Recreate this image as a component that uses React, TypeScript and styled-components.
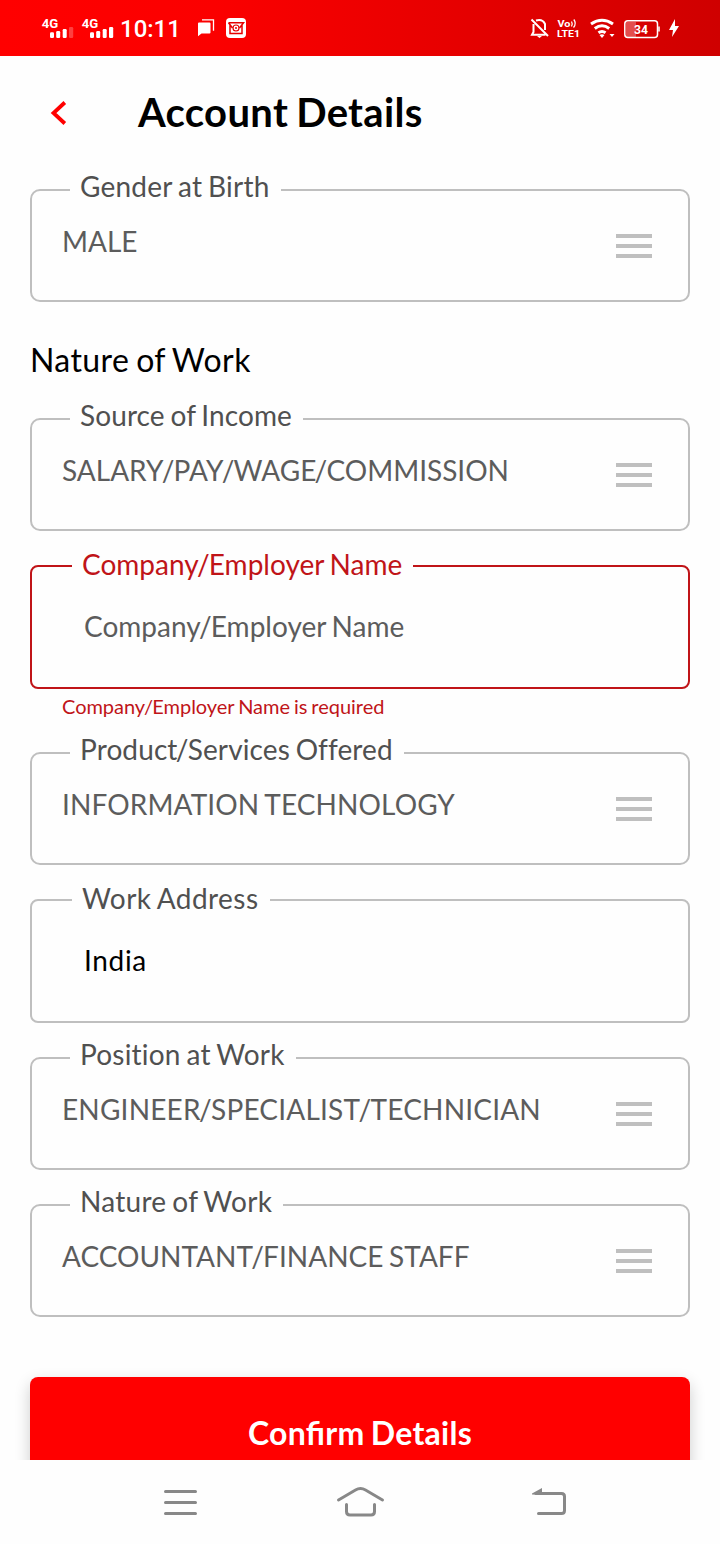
import React from "react";
import styled, { createGlobalStyle } from "styled-components";

const GlobalStyle = createGlobalStyle`
  * { box-sizing: border-box; }
  body { margin: 0; background: #fff; font-family: Lato, sans-serif; color: #000; }
`;

const Screen = styled.div`
  width: 720px;
  height: 1544px;
  display: flex;
  flex-direction: column;
  overflow: hidden;
  background: #fefefe;
`;

const StatusBar = styled.div`
  height: 56px;
  flex: none;
  display: flex;
  justify-content: space-between;
  padding-left: 40px;
  background: linear-gradient(90deg, #ff0000 0%, #fb0000 30%, #cf0000 100%);
  font-family: Roboto, sans-serif;
  color: #fff;
`;

const StatusGroup = styled.div`
  display: flex;
  svg { display: block; }
`;

const Clock = styled.div`
  width: 76px;
  font-size: 24px;
  font-weight: 500;
  line-height: 58px;
`;

const Content = styled.main`
  flex: 1;
  min-height: 0;
  overflow: hidden;
  padding: 0 30px;
`;

const Header = styled.header`
  height: 133px;
  display: flex;
  padding-left: 20px;
`;

const BackIcon = styled.svg`
  width: 18px;
  height: 26px;
  margin-top: 44px;
`;

const Title = styled.h1`
  margin: 32px 0 0 70px;
  font-size: 40px;
  line-height: 48px;
  font-weight: 700;
  letter-spacing: 0.33px;
  word-spacing: -2px;
`;

const SectionTitle = styled.h2`
  margin: 38px 0 0;
  height: 78px;
  font-size: 32px;
  line-height: 40px;
  font-weight: 400;
  letter-spacing: 0.4px;
  word-spacing: -1.7px;
`;

type Kind = "select" | "input";

const FieldBox = styled.div<{ $kind: Kind; $error?: boolean; $gap?: number }>`
  position: relative;
  display: flex;
  justify-content: space-between;
  height: ${(p) => (p.$kind === "select" ? 113 : 124)}px;
  margin-top: ${(p) => p.$gap ?? 0}px;
  padding: ${(p) => (p.$kind === "select" ? "33px 36px 0 30px" : "42px 36px 0 52px")};
  border: 2px solid ${(p) => (p.$error ? "#c01418" : "#bfbfbf")};
  border-radius: ${(p) => (p.$kind === "select" ? 10 : 8)}px;
`;

const Label = styled.label<{ $kind: Kind; $error?: boolean; $track: number }>`
  position: absolute;
  left: ${(p) => (p.$kind === "select" ? 38 : 40)}px;
  top: ${(p) => (p.$kind === "select" ? -22 : -20)}px;
  padding: 0 11px 0 10px;
  background: #fefefe;
  font-size: 28px;
  line-height: 34px;
  white-space: nowrap;
  letter-spacing: ${(p) => p.$track}px;
  word-spacing: -1.5px;
  color: ${(p) => (p.$error ? "#c01418" : "#505050")};
`;

const Value = styled.div<{ $dark?: boolean; $track: number }>`
  font-size: 28px;
  line-height: 34px;
  white-space: nowrap;
  letter-spacing: ${(p) => p.$track}px;
  word-spacing: -1.5px;
  color: ${(p) => (p.$dark ? "#000" : "#5c5c5c")};
`;

const Slash = styled.span`
  margin: 0 -0.03em 0 -0.062em;
`;

const Handle = styled.div`
  width: 36px;
  height: 24px;
  margin-top: 10px;
  display: flex;
  flex-direction: column;
  justify-content: space-between;
`;

const HandleLine = styled.span`
  height: 4px;
  background: #bfbfbf;
`;

const ErrorText = styled.p`
  margin: 0;
  height: 63px;
  padding: 5px 0 0 32px;
  font-size: 20px;
  line-height: 24px;
  letter-spacing: -0.03px;
  word-spacing: -1.1px;
  color: #c01418;
`;

const ConfirmButton = styled.button`
  display: block;
  width: 660px;
  height: 112px;
  margin-top: 60px;
  border: 0;
  border-radius: 8px;
  background: #ff0000;
  color: #fff;
  font: 700 32px/38px Lato, sans-serif;
  letter-spacing: 0.25px;
  word-spacing: -1.6px;
  font-feature-settings: "liga" 1;
  box-shadow: 0 6px 16px rgba(0, 0, 0, 0.2);
`;

const NavBar = styled.nav`
  height: 84px;
  flex: none;
  background: #fefefe;
  svg { display: block; }
`;

/** Tightens the space round each slash in a label or value. */
function Slashed({ text }: { text: string }) {
  return (
    <span>
      {text.split("/").map((part, i) => (
        <React.Fragment key={i}>
          {i > 0 && <Slash>/</Slash>}
          {part}
        </React.Fragment>
      ))}
    </span>
  );
}

function Field({ kind, label, value, error, dark, gap, labelTrack = 0, valueTrack = 0 }: {
  kind: Kind; label: string; value: string; error?: boolean; dark?: boolean; gap?: number;
  labelTrack?: number; valueTrack?: number;
}) {
  return (
    <FieldBox $kind={kind} $error={error} $gap={gap}>
      <Label $kind={kind} $error={error} $track={labelTrack}><Slashed text={label} /></Label>
      <Value $dark={dark} $track={valueTrack}><Slashed text={value} /></Value>
      {kind === "select" && (
        <Handle><HandleLine /><HandleLine /><HandleLine /></Handle>
      )}
    </FieldBox>
  );
}

function Signal({ weak }: { weak?: boolean }) {
  return (
    <svg width="40" height="56" viewBox="0 0 40 56" fill="#fff">
      <text x="1.8" y="28" fontSize="13.5" fontWeight="700" fontFamily="Roboto, sans-serif" textLength="16.500" lengthAdjust="spacingAndGlyphs">4G</text>
      <rect x="10" y="32.200" width="4" height="5.800" rx="1.200" />
      <rect x="16.200" y="31" width="4" height="7" rx="1.200" />
      <rect x="22.700" y="29" width="4" height="9" rx="1.200" />
      <rect x="29" y="27" width="4.200" height="11" rx="1.200" opacity={weak ? 0.25 : 1} />
    </svg>
  );
}

export default function App() {
  return (
    <>
      <GlobalStyle />
      <Screen>
        <StatusBar>
          <StatusGroup>
            <Signal weak />
            <Signal />
            <Clock>10:11</Clock>
            <svg width="60" height="56" viewBox="196 0 60 56" fill="none">
              <path d="M199 22.500h10.500q1 0 1 1v9q0 1-1 1h-8l-3.500 2.800V23.500q0-1 1-1z" fill="#fff" />
              <path d="M202 19.800h11.500v11" stroke="#fff" strokeWidth="1.300" />
              <rect x="226" y="18" width="20" height="20" rx="4" fill="#fff" />
              <path d="M230 25v8.500h12v-8.500M228.500 22.800h15l-4 5.200M228.500 22.800l4 5.200" stroke="#e60000" strokeWidth="1.500" />
              <circle cx="236" cy="28" r="3" fill="#fff" stroke="#e60000" strokeWidth="1.200" />
              <circle cx="236" cy="28" r="1" fill="#e60000" />
            </svg>
          </StatusGroup>
          <StatusGroup>
            <svg width="200" height="56" viewBox="520 0 200 56" fill="none" stroke="#fff">
              <path d="M536 20.500q6.500-2 9 3.500v6M533.500 24v8l-1.500 2.800h13.500M531.500 19.500l16.500 16.500" strokeWidth="2" />
              <path d="M537 36h5l-2.500 2z" fill="#fff" stroke="none" />
              <g fill="#fff" stroke="none" fontFamily="Roboto, sans-serif" fontWeight="700">
                <text x="557.500" y="26.500" fontSize="9.500" textLength="13" lengthAdjust="spacingAndGlyphs">Vo</text>
                <text x="557" y="37.200" fontSize="9.500" textLength="23" lengthAdjust="spacingAndGlyphs">LTE1</text>
              </g>
              <path d="M571.500 21.500q1.500 2.500 0 5M573.800 19.500q3 4-.3 8" strokeWidth="1.300" />
              <path d="M591 24q11-7.500 22 0M594.800 28.500q7.200-5.500 14.400 0M598.500 32.800q3.500-2.500 7 0" strokeWidth="3" />
              <path d="M599.500 35q2.500-1.500 5 0l-2.500 3zM609.500 34h5l-2.500 3z" fill="#fff" stroke="none" />
              <rect x="626" y="22" width="10" height="15" fill="#fff" fillOpacity=".3" stroke="none" />
              <rect x="624.800" y="20.800" width="32.700" height="16.600" rx="3" strokeWidth="1.500" />
              <path d="M659 26.500v5" strokeWidth="1.500" />
              <text x="634" y="34" fontSize="12" fontWeight="700" fontFamily="Roboto, sans-serif" fill="#fff" stroke="none" textLength="14" lengthAdjust="spacingAndGlyphs">34</text>
              <path d="M675 19l-6 11h4l-1 7 7-11h-4z" fill="#fff" stroke="none" />
            </svg>
          </StatusGroup>
        </StatusBar>
        <Content>
          <Header>
            <BackIcon viewBox="50 100 18 26" fill="none" stroke="#ff0000" strokeWidth="3.800">
              <path d="M64.800 102.500 53.500 113l11.300 10.500" />
            </BackIcon>
            <Title>Account Details</Title>
          </Header>
          <Field kind="select" label="Gender at Birth" value="MALE" labelTrack={0.22} />
          <SectionTitle>Nature of Work</SectionTitle>
          <Field kind="select" label="Source of Income" value="SALARY/PAY/WAGE/COMMISSION" labelTrack={0.1} />
          <Field kind="input" label="Company/Employer Name" value="Company/Employer Name" error gap={34} labelTrack={0.01} valueTrack={0.01} />
          <ErrorText><Slashed text="Company/Employer Name is required" /></ErrorText>
          <Field kind="select" label="Product/Services Offered" value="INFORMATION TECHNOLOGY" labelTrack={0.11} valueTrack={0.12} />
          <Field kind="input" label="Work Address" value="India" dark gap={34} labelTrack={0.45} valueTrack={0.65} />
          <Field kind="select" label="Position at Work" value="ENGINEER/SPECIALIST/TECHNICIAN" gap={34} labelTrack={0.2} valueTrack={0.2} />
          <Field kind="select" label="Nature of Work" value="ACCOUNTANT/FINANCE STAFF" gap={34} labelTrack={0.28} valueTrack={0.01} />
          <ConfirmButton>Confirm Details</ConfirmButton>
        </Content>
        <NavBar>
          <svg width="720" height="84" viewBox="0 1460 720 84" fill="none" stroke="#888" strokeWidth="3" strokeLinecap="round">
            <path d="M165.500 1491.500h30M165.500 1502.500h30M165.500 1513.500h30" />
            <path d="M338.500 1500l17-10q5-2.800 10 0l17 10M346.500 1504.500v7q0 3.500 3.500 3.500h21q3.500 0 3.500-3.500v-7" />
            <path d="M536 1493.500h25.500q3 0 3 3v14q0 3-3 3h-23" />
            <path d="M532 1494.500v-1l10-5.500v7z" fill="#888" stroke="none" />
          </svg>
        </NavBar>
      </Screen>
    </>
  );
}
